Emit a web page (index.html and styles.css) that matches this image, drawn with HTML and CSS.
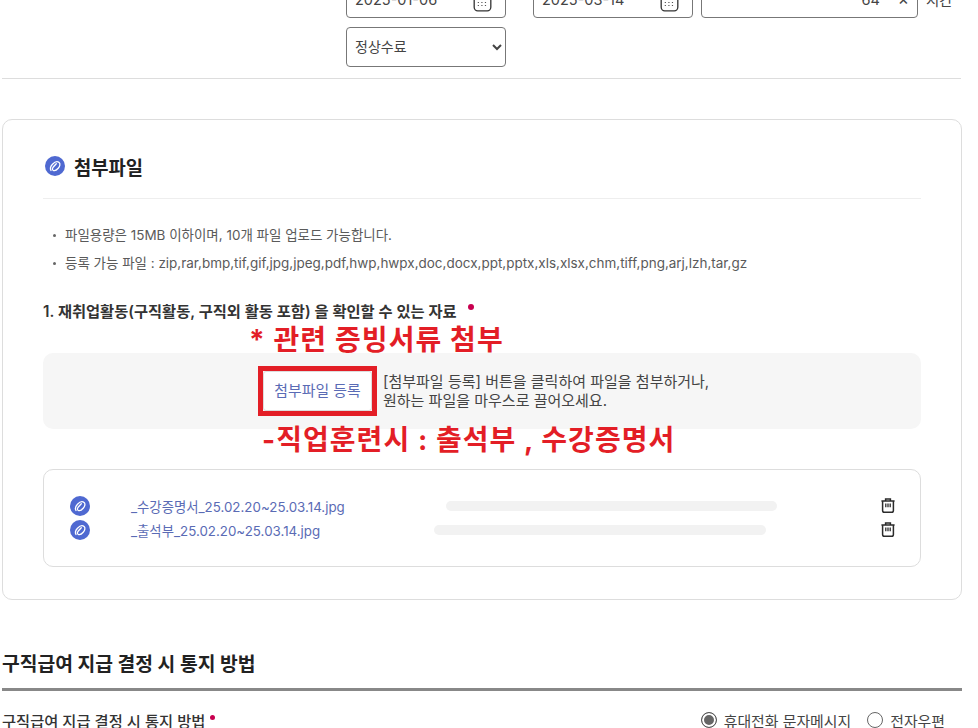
FILE: index.html
```html
<!DOCTYPE html>
<html lang="ko">
<head>
<meta charset="utf-8">
<title>첨부파일</title>
<link rel="stylesheet" href="styles.css">
</head>
<body>
<svg class="defs" width="0" height="0" aria-hidden="true">
  <symbol id="clip" viewBox="0 0 20 20">
    <circle cx="10" cy="10" r="10" fill="#4f69d1"/>
    <path d="M11.3 7.8 8.1 11.3c-1 1.2-.9 2.5.1 3 1.5.7 3.5-.3 5-2 1.8-2 2.3-4.6.9-5.8-1.6-1.3-4.4-.6-6.6 1.7-2 2.1-2.5 4.6-1.5 6.3" fill="none" stroke="#fff" stroke-width="1.3" stroke-linecap="round"/>
  </symbol>
  <symbol id="trash" viewBox="0 0 14 15">
    <path d="M.4 3h13.2M4.6 3V1h4.8v2M1.6 3v9.4c0 1 .7 1.8 1.7 1.8h7.4c1 0 1.7-.8 1.7-1.8V3" fill="none" stroke="#2b2b2b" stroke-width="1.5"/>
    <path d="M4.8 5.6v3.6M7 5.6v3.6M9.2 5.6v3.6" stroke="#2b2b2b" stroke-width="1.3"/>
  </symbol>
  <symbol id="cal" viewBox="0 0 16 16">
    <rect x="1" y="1" width="14" height="14" rx="3" fill="none" stroke="#333" stroke-width="1.1"/>
    <path d="M4 8h1M7 8h1M10 8h1M4 10.5h1M7 10.5h1M10 10.5h1" stroke="#555"/>
  </symbol>
</svg>

<section class="period">
  <div class="period-row">
    <div class="field date"><span>2025-01-06</span><svg class="cal"><use href="#cal"/></svg></div>
    <div class="field date second"><span>2025-03-14</span><svg class="cal"><use href="#cal"/></svg></div>
    <div class="field hours"><span>64</span><span class="clear">×</span></div>
    <span class="unit">시간</span>
  </div>
  <select class="status"><option>정상수료</option></select>
</section>

<section class="panel">
  <h2 class="panel-title"><svg class="clip"><use href="#clip"/></svg>첨부파일</h2>
  <ul class="notes">
    <li>파일용량은 15MB 이하이며, 10개 파일 업로드 가능합니다.</li>
    <li>등록 가능 파일 : zip,rar,bmp,tif,gif,jpg,jpeg,pdf,hwp,hwpx,doc,docx,ppt,pptx,xls,xlsx,chm,tiff,png,arj,lzh,tar,gz</li>
  </ul>
  <h3 class="req-title">1. 재취업활동(구직활동, 구직외 활동 포함) 을 확인할 수 있는 자료<i class="dot"></i></h3>

  <div class="drop-wrap">
    <p class="note-red note-a">* 관련 증빙서류 첨부</p>
    <div class="drop">
      <span class="red-box"><button class="upload" type="button">첨부파일 등록</button></span>
      <p class="drop-text">[첨부파일 등록] 버튼을 클릭하여 파일을 첨부하거나,<br>원하는 파일을 마우스로 끌어오세요.</p>
    </div>
    <p class="note-red note-b">-직업훈련시 : 출석부 , 수강증명서</p>
  </div>

  <div class="files">
    <div class="file">
      <svg class="clip"><use href="#clip"/></svg>
      <a class="file-name name-a">_수강증명서_25.02.20~25.03.14.jpg</a>
      <span class="bar"></span>
      <svg class="trash"><use href="#trash"/></svg>
    </div>
    <div class="file">
      <svg class="clip"><use href="#clip"/></svg>
      <a class="file-name name-b">_출석부_25.02.20~25.03.14.jpg</a>
      <span class="bar"></span>
      <svg class="trash"><use href="#trash"/></svg>
    </div>
  </div>
</section>

<section class="notify">
  <h2 class="notify-title">구직급여 지급 결정 시 통지 방법</h2>
  <div class="notify-row">
    <span class="notify-label">구직급여 지급 결정 시 통지 방법<i class="dot small"></i></span>
    <div class="radios">
      <label class="radio"><i class="mark on"></i>휴대전화 문자메시지</label>
      <label class="radio"><i class="mark"></i>전자우편</label>
    </div>
  </div>
</section>
</body>
</html>
```

FILE: styles.css
```css
* { box-sizing: border-box; }
html, body { height: 728px; overflow: hidden; }
body {
  margin: 0;
  padding: 0 16px 0 2px;
  background: #fff;
  color: #333;
  font-family: Inter, "Noto Sans CJK KR", sans-serif;
  font-size: 13px;
}
.defs { position: absolute; }

.period {
  height: 101px;
  margin-top: -22px;
  margin-right: 1px;
  border-bottom: 1px solid #ddd;
  padding-left: 344px;
}
.period-row {
  display: flex;
  align-items: center;
  height: 40px;
  margin-bottom: 9px;
}
.field {
  display: flex;
  align-items: center;
  height: 40px;
  border: 1px solid #777;
  border-radius: 4px;
  background: #fff;
  font-size: 14.5px;
  color: #444;
  padding: 2px 13px 0 8px;
}
.date { width: 160px; justify-content: space-between; }
.date.second { margin-left: 27px; }
.cal { width: 19px; height: 19px; margin-top: 6px; }
.hours { width: 217px; margin-left: 8px; justify-content: flex-end; padding-right: 8px; }
.clear { margin-left: 18px; font-size: 17px; }
.unit { margin-left: 8px; font-size: 14.5px; color: #444; padding-top: 2px; }
.status {
  display: block;
  width: 160px;
  height: 40px;
  border: 1px solid #777;
  border-radius: 4px;
  background: #fff;
  color: #444;
  font: 14px/18px Inter, "Noto Sans CJK KR", sans-serif;
  padding: 0 0 2px 4px;
}

.panel {
  margin-top: 40px;
  height: 481px;
  width: 960px;
  border: 1px solid #ddd;
  border-radius: 10px;
  padding: 0 40px;
}
.panel-title {
  display: flex;
  align-items: center;
  gap: 9px;
  height: 79px;
  margin: 0;
  padding: 14px 0 0 2px;
  border-bottom: 1px solid #eee;
  font-size: 18.8px;
  font-weight: 700;
  color: #222;
}
.clip { width: 20px; height: 20px; flex: none; }
.notes {
  list-style: none;
  margin: 22px 0 0;
  padding: 0 0 0 10px;
  font-size: 13.48px;
  color: #5a5a5a;
}
.notes li {
  height: 28px;
  line-height: 28px;
  padding-left: 12px;
  position: relative;
}
.notes li::before {
  content: "";
  position: absolute;
  left: 0;
  top: 13px;
  width: 3px;
  height: 3px;
  border-radius: 50%;
  background: #666;
}
.req-title {
  margin: 23px 0 0;
  height: 24px;
  line-height: 24px;
  font-size: 15.3px;
  font-weight: 600;
  color: #333;
}
.dot {
  display: inline-block;
  width: 6px;
  height: 6px;
  margin-left: 11px;
  border-radius: 50%;
  background: #c8004f;
  vertical-align: 7px;
}
.dot.small { width: 5px; height: 5px; margin-left: 5px; }

.drop-wrap { position: relative; margin-top: 29px; }
.drop {
  display: flex;
  align-items: center;
  height: 76px;
  padding-left: 215px;
  background: #f6f6f6;
  border-radius: 10px;
}
.red-box {
  display: block;
  flex: none;
  border: 5px solid #e31e26;
}
.upload {
  display: block;
  width: 109px;
  height: 40px;
  padding: 0 0 3px;
  border: 1px solid #ddd;
  border-radius: 3px;
  background: #fff;
  color: #5a6bb5;
  font: 14.9px Inter, "Noto Sans CJK KR", sans-serif;
}
.drop-text {
  margin: 0 0 0 6px;
  font-size: 15px;
  line-height: 19px;
  color: #444;
}
.note-red {
  position: absolute;
  margin: 0;
  white-space: nowrap;
  color: #e31e26;
  font-size: 28px;
  line-height: 32px;
  font-weight: 700;
}
.note-a { left: 206px; top: -29px; letter-spacing: 1.1px; }
.note-b { left: 219px; top: 71px; letter-spacing: 1.05px; }

.files {
  margin-top: 40px;
  height: 98px;
  border: 1px solid #ddd;
  border-radius: 10px;
  padding: 24px 25px 0 26px;
}
.file {
  display: flex;
  align-items: center;
  height: 24px;
}
.file-name {
  margin-left: 41px;
  font-size: 13.35px;
  color: #5a6bb5;
  white-space: nowrap;
}
.name-a { width: 315px; }
.name-b { width: 303px; }
.bar {
  width: 331px;
  height: 10px;
  border-radius: 5px;
  background: #f2f2f2;
}
.name-b + .bar { width: 332px; }
.trash { width: 14px; height: 15px; margin-left: auto; margin-top: -2px; flex: none; }

.notify { width: 960px; margin-top: 52px; }
.notify-title {
  margin: 0;
  line-height: 24px;
  font-size: 19.3px;
  font-weight: 700;
  color: #222;
  border-bottom: 3px solid #888;
  box-sizing: content-box;
  height: 24px;
  padding-bottom: 12px;
}
.notify-row {
  display: flex;
  justify-content: space-between;
  align-items: center;
  margin-top: 17px;
  height: 24px;
}
.notify-label { font-size: 15.3px; color: #333; font-weight: 500; }
.radios { display: flex; gap: 16px; margin-right: 17px; }
.radio {
  display: flex;
  align-items: center;
  gap: 7px;
  font-size: 14.9px;
  color: #444;
}
.mark {
  display: block;
  width: 16px;
  height: 16px;
  border: 1px solid #666;
  border-radius: 50%;
  background: #fff;
}
.mark.on {
  border-color: #555;
  background: #666;
  box-shadow: inset 0 0 0 2px #fff;
}
```
